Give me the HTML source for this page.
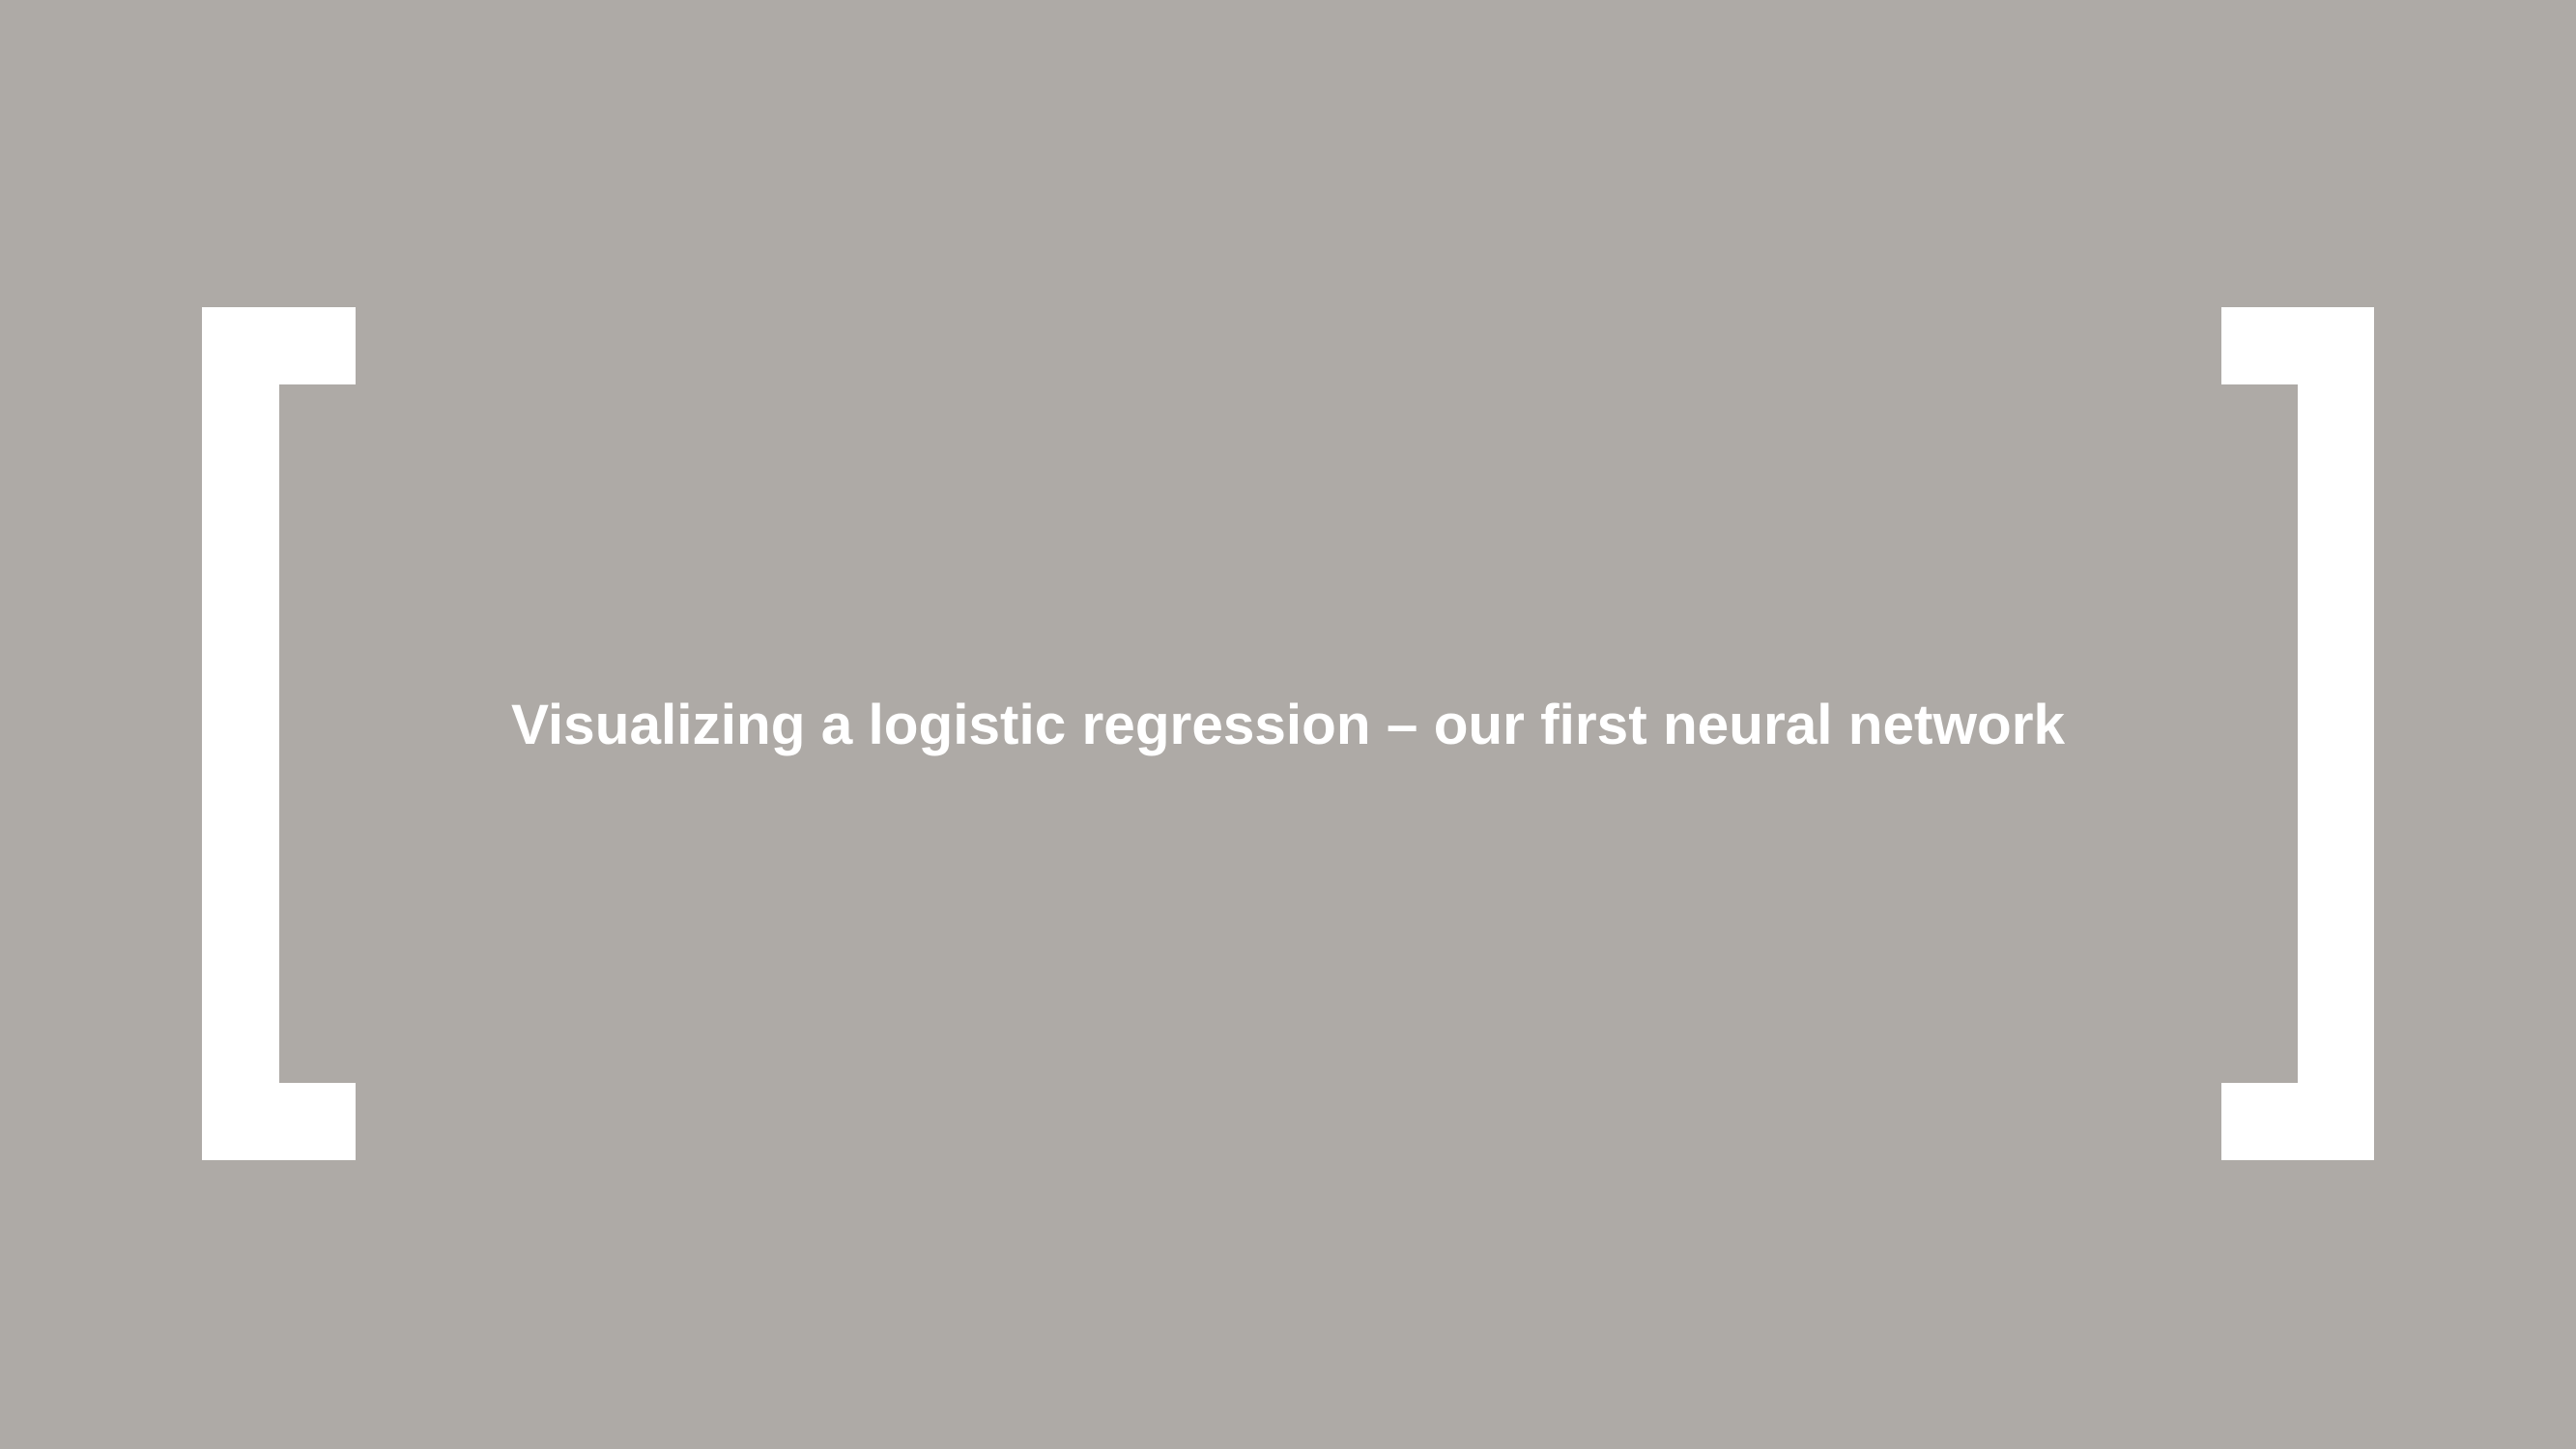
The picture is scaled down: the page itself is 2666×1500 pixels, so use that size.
<!DOCTYPE html>
<html><head><style>
html,body{margin:0;padding:0}
body{width:2666px;height:1500px;background:#aeaaa6;position:relative;overflow:hidden}
.w{position:absolute;background:#fff}
.t{position:absolute;left:0;width:2666px;top:709px;text-align:center;color:#fff;font:bold 58.5px "Liberation Sans",Arial,sans-serif;line-height:84px;white-space:nowrap}
</style></head><body>
<div class="w" style="left:209px;top:318px;width:80px;height:883px"></div>
<div class="w" style="left:209px;top:318px;width:159px;height:80px"></div>
<div class="w" style="left:209px;top:1121px;width:159px;height:80px"></div>
<div class="w" style="left:2378px;top:318px;width:79px;height:883px"></div>
<div class="w" style="left:2299px;top:318px;width:158px;height:80px"></div>
<div class="w" style="left:2299px;top:1121px;width:158px;height:80px"></div>
<div class="t">Visualizing a logistic regression – our first neural network</div>
</body></html>
